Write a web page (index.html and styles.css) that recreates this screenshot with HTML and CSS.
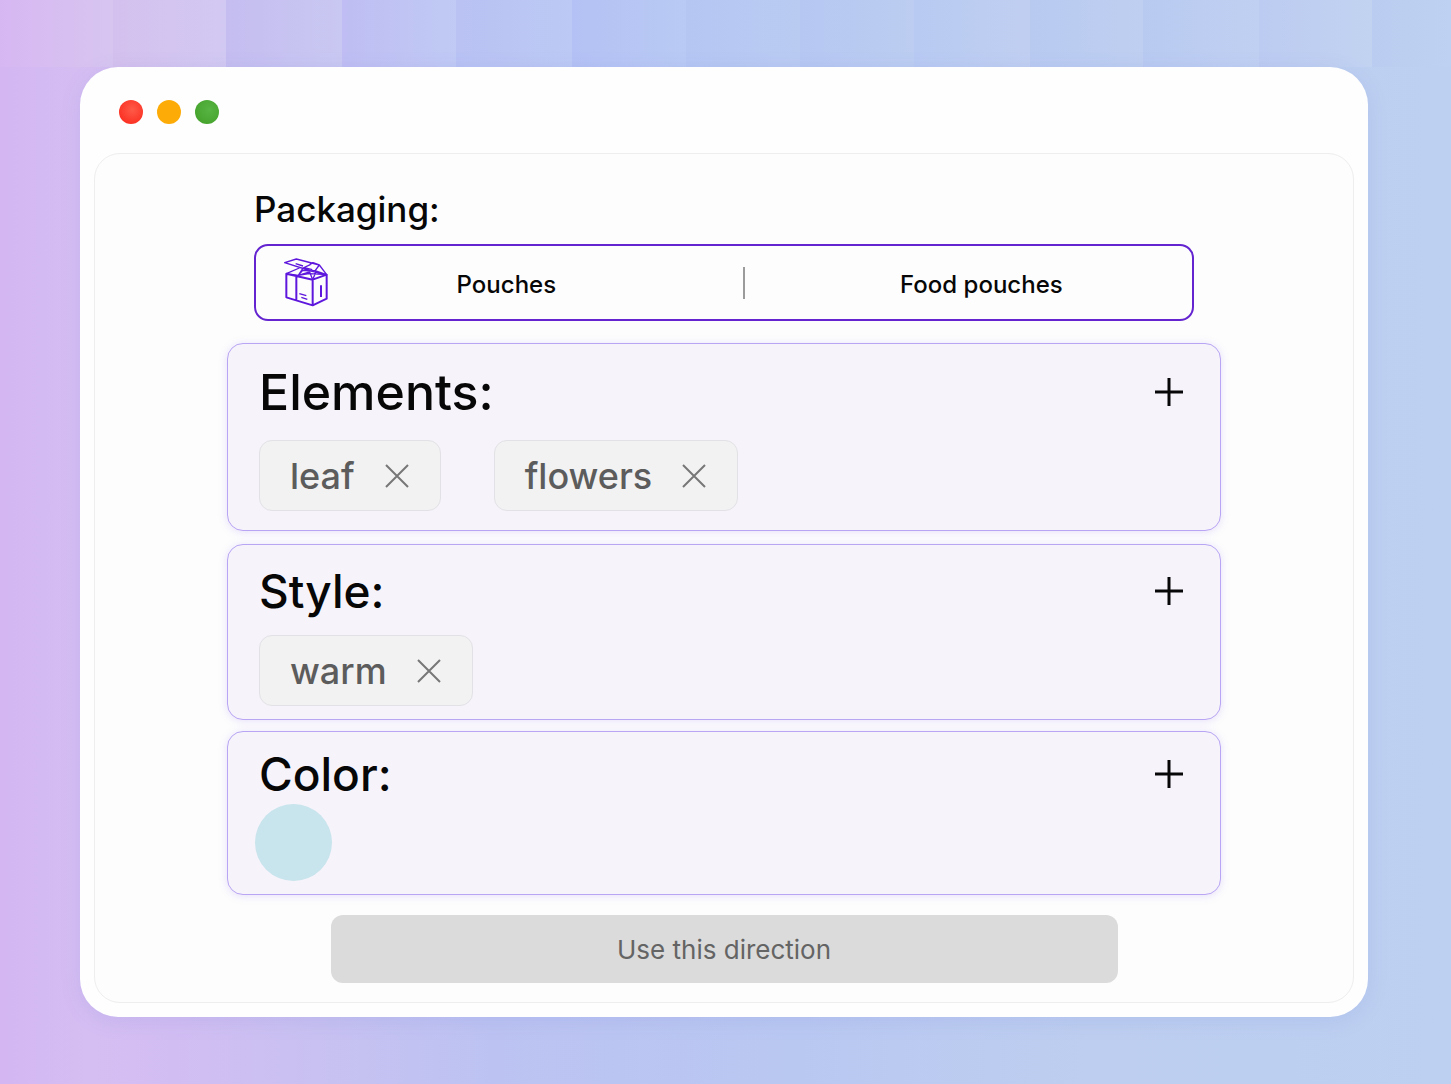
FILE: index.html
```html
<!DOCTYPE html>
<html lang="en">
<head>
    <meta charset="UTF-8">
    <meta name="viewport" content="width=device-width, initial-scale=1.0">
    <title>Packaging</title>
    <link rel="stylesheet" href="styles.css">
</head>
<body>
    <div class="window">
        <div class="title-bar">
            <span class="dot red"></span>
            <span class="dot yellow"></span>
            <span class="dot green"></span>
        </div>
        <main class="panel">
            <div class="packaging">
                <h1 id="packaging-label">Packaging:</h1>
                <div class="picker" role="group" aria-labelledby="packaging-label">
                    <button type="button" class="option option-main">
                        <svg class="box-icon" viewBox="45 40 138 147" aria-hidden="true">
                            <path d="M52 87L131 105V182L52 158ZM131 105L173 90V162L131 182M82 94V167"/>
                            <path class="thin" d="M47 54L82 43L151 61L139 77L126 79ZM122 60L132 54L151 61L173 90L140 79M52 87L91 70M52 87L88 92L101 77L126 79L173 90M131 105L122 82L88 92L102 70L124 60M131 105L142 78M88 92L120 87L173 90M80 57L102 64M106 69L130 75"/>
                            <path class="thin" d="M91 147L112 153M97 158L115 164"/>
                            <path d="M156 122V157"/>
                        </svg>
                        <span>Pouches</span>
                    </button>
                    <span class="divider"></span>
                    <button type="button" class="option option-sub"><span>Food pouches</span></button>
                </div>
            </div>

            <section class="card elements">
                <div class="card-head">
                    <h2>Elements:</h2>
                    <button type="button" class="add" aria-label="Add element">
                        <svg viewBox="0 0 30 30"><path d="M15 1V29M1 15H29"/></svg>
                    </button>
                </div>
                <div class="chips">
                    <span class="chip">leaf
                        <button type="button" aria-label="Remove leaf"><svg viewBox="0 0 24 24"><path d="M1 1L23 23M23 1L1 23"/></svg></button>
                    </span>
                    <span class="chip">flowers
                        <button type="button" aria-label="Remove flowers"><svg viewBox="0 0 24 24"><path d="M1 1L23 23M23 1L1 23"/></svg></button>
                    </span>
                </div>
            </section>

            <section class="card style">
                <div class="card-head">
                    <h2>Style:</h2>
                    <button type="button" class="add" aria-label="Add style">
                        <svg viewBox="0 0 30 30"><path d="M15 1V29M1 15H29"/></svg>
                    </button>
                </div>
                <div class="chips">
                    <span class="chip">warm
                        <button type="button" aria-label="Remove warm"><svg viewBox="0 0 24 24"><path d="M1 1L23 23M23 1L1 23"/></svg></button>
                    </span>
                </div>
            </section>

            <section class="card color">
                <div class="card-head">
                    <h2>Color:</h2>
                    <button type="button" class="add" aria-label="Add color">
                        <svg viewBox="0 0 30 30"><path d="M15 1V29M1 15H29"/></svg>
                    </button>
                </div>
                <button type="button" class="swatch" aria-label="Light blue"></button>
            </section>

            <button type="submit" class="submit">Use this direction</button>
        </main>
    </div>
</body>
</html>
```
FILE: styles.css
```css
* {
    box-sizing: border-box;
}

body {
    font-family: Inter, "Liberation Sans", sans-serif;
    color: #070707;
    margin: 0;
    padding: 67px 83px 67px 80px;
    min-height: 100vh;
    /* striped band along the top, soft gradient underneath */
    background:
        linear-gradient(90deg,
            #d7b7f2 0, #d7c5f0 113px,
            #d4c0ee 113px, #d2c9f2 226px,
            #c5bdf0 226px, #c9c8f2 342px,
            #bfbdf3 342px, #c0caf4 456px,
            #b9c2f3 456px, #bcc9f4 572px,
            #b4c1f4 572px, #b9caf4 686px,
            #b5c6f3 686px, #bacbf2 800px,
            #b6c7f2 800px, #bccdf1 914px,
            #b8caf2 914px, #c0cff1 1030px,
            #b9caf1 1030px, #becff1 1143px,
            #b9caf1 1143px, #c0d0f2 1259px,
            #bccbf1 1259px, #c2d3f1 1372px,
            #bacdf0 1372px, #bfd1f2 100%) no-repeat 0 0 / 100% 67px,
        linear-gradient(90deg, #d3b6f2 0%, #d5bef2 6%, #d2bdf2 12%, #c8c1f1 22%, #bcc3f2 34%, #b9c8f1 55%, #bdcef0 75%, #bdd0f1 100%);
}

button {
    font: inherit;
    color: inherit;
    background: none;
    border: none;
    padding: 0;
    cursor: pointer;
}

svg {
    display: block;
    fill: none;
    stroke: currentColor;
}

h1,
h2 {
    margin: 0;
    font-weight: 500;
}

.window {
    padding: 0 14px 14px;
    border-radius: 38px;
    background-color: #fefefe;
    box-shadow: 0 4px 20px rgba(120, 130, 215, 0.16);
}

.title-bar {
    display: flex;
    gap: 14px;
    padding: 33px 25px 29px;
}

.dot {
    width: 24px;
    height: 24px;
    border-radius: 50%;
}

.red {
    background: radial-gradient(circle at 55% 40%, #ff5a48, #fb3426 70%);
}

.yellow {
    background-color: #fdab07;
}

.green {
    background: radial-gradient(circle at 60% 40%, #58b443, #47a52f 70%);
}

.panel {
    display: flex;
    flex-direction: column;
    align-items: center;
    padding: 32px 24px 19px;
    border: 1px solid #eeeeef;
    border-radius: 26px;
    background-color: #fdfdfd;
}

/* Packaging picker */
.packaging {
    width: 100%;
    max-width: 940px;
    margin-bottom: 22px;
}

.packaging h1 {
    font-size: 35px;
    line-height: 46px;
    margin-bottom: 12px;
}

.picker {
    display: flex;
    align-items: center;
    height: 77px;
    border: 2px solid #6425d0;
    border-radius: 14px;
}

.option {
    display: flex;
    align-items: center;
    height: 100%;
    font-size: 24px;
    font-weight: 500;
}

.option span {
    flex: 1;
    padding-top: 3px;
    text-align: center;
}

.option-main {
    width: 52%;
    padding: 0 60px 0 28px;
}

.option-sub {
    flex: 1;
    padding-left: 26px;
}

.divider {
    width: 2px;
    height: 32px;
    background-color: #9b9b9b;
}

.box-icon {
    width: 46px;
    height: 49px;
    color: #5e17dc;
    stroke-width: 6;
    stroke-linejoin: round;
}

.box-icon .thin {
    stroke-width: 4;
}

/* Cards */
.card {
    width: 100%;
    max-width: 994px;
    padding: 0 36px 0 31px;
    border: 1px solid #b8a5f3;
    border-radius: 16px;
    background-color: #f6f3fb;
    box-shadow: 0 1px 8px rgba(150, 120, 240, 0.22);
}

.elements {
    padding-top: 18px;
    padding-bottom: 19px;
    margin-bottom: 13px;
}

.style {
    padding-top: 16px;
    padding-bottom: 13px;
    margin-bottom: 11px;
}

.color {
    padding-top: 12px;
    padding-bottom: 13px;
    margin-bottom: 20px;
}

.card-head {
    display: flex;
    align-items: center;
    justify-content: space-between;
    height: 60px;
}

.card-head h2 {
    font-size: 46px;
    line-height: 60px;
}

.elements h2 {
    font-size: 50px;
}

.elements .card-head {
    margin-bottom: 18px;
}

.style .card-head {
    margin-bottom: 14px;
}

.add svg {
    width: 30px;
    height: 30px;
    stroke-width: 3;
}

.chips {
    display: flex;
    flex-wrap: wrap;
    gap: 53px;
}

.chip {
    display: flex;
    align-items: center;
    gap: 30px;
    height: 71px;
    padding: 0 31px 0 30px;
    border: 1px solid #e2e1e5;
    border-radius: 13px;
    background-color: #f2f2f2;
    color: #5c5c5c;
    font-size: 36px;
    font-weight: 500;
}

.chip svg {
    width: 24px;
    height: 24px;
    color: #777777;
    stroke-width: 2;
}

.swatch {
    display: block;
    width: 77px;
    height: 77px;
    margin-left: -4px;
    border-radius: 50%;
    background-color: #c8e4ec;
}

.submit {
    width: 100%;
    max-width: 787px;
    height: 68px;
    border-radius: 12px;
    background-color: #dbdbdb;
    color: #646464;
    font-size: 26px;
}
```
